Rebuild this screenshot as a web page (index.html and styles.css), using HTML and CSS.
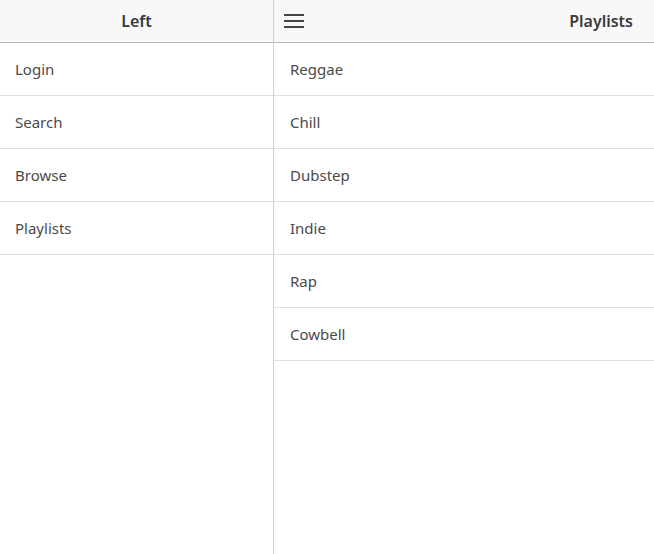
FILE: index.html
```html
<!DOCTYPE html>
<html>
<head>
<meta charset="utf-8">
<link rel="stylesheet" href="styles.css">
</head>
<body>
<div class="app">
  <aside class="menu">
    <header class="bar center"><span class="title">Left</span></header>
    <ul class="list">
      <li>Login</li>
      <li>Search</li>
      <li>Browse</li>
      <li>Playlists</li>
    </ul>
  </aside>
  <main class="content">
    <header class="bar">
      <svg class="burger" width="20" height="14" viewBox="0 0 20 14"><rect x="0" y="0" width="20" height="2" fill="#444"/><rect x="0" y="6" width="20" height="2" fill="#444"/><rect x="0" y="12" width="20" height="2" fill="#444"/></svg>
      <span class="title">Playlists</span>
    </header>
    <ul class="list">
      <li>Reggae</li>
      <li>Chill</li>
      <li>Dubstep</li>
      <li>Indie</li>
      <li>Rap</li>
      <li>Cowbell</li>
    </ul>
  </main>
</div>
</body>
</html>
```
FILE: styles.css
```css
* { box-sizing: border-box; }
html, body { margin: 0; padding: 0; height: 100%; }
body { font-family: "Noto Sans", "Open Sans", sans-serif; background: #fff; color: #444; }
.app { display: flex; height: 554px; width: 654px; }
.menu { width: 274px; border-right: 1px solid #cfcfcf; display: flex; flex-direction: column; }
.content { flex: 1; display: flex; flex-direction: column; }
.bar { height: 43px; background: #f8f8f8; border-bottom: 1px solid #b5b5b5; display: flex; align-items: center; justify-content: space-between; padding: 0 21px 1px 10px; }
.bar.center { justify-content: center; padding: 0 0 1px; }
.title { font-size: 16px; font-weight: 600; color: #3a3a3a; }
.burger { display: block; }
.list { list-style: none; margin: 0; padding: 0; }
.list li { height: 53px; border-bottom: 1px solid #dedede; display: flex; align-items: center; padding-left: 15px; font-size: 15px; color: #4a4a4a; }
.content .list li { padding-left: 16px; }
```
